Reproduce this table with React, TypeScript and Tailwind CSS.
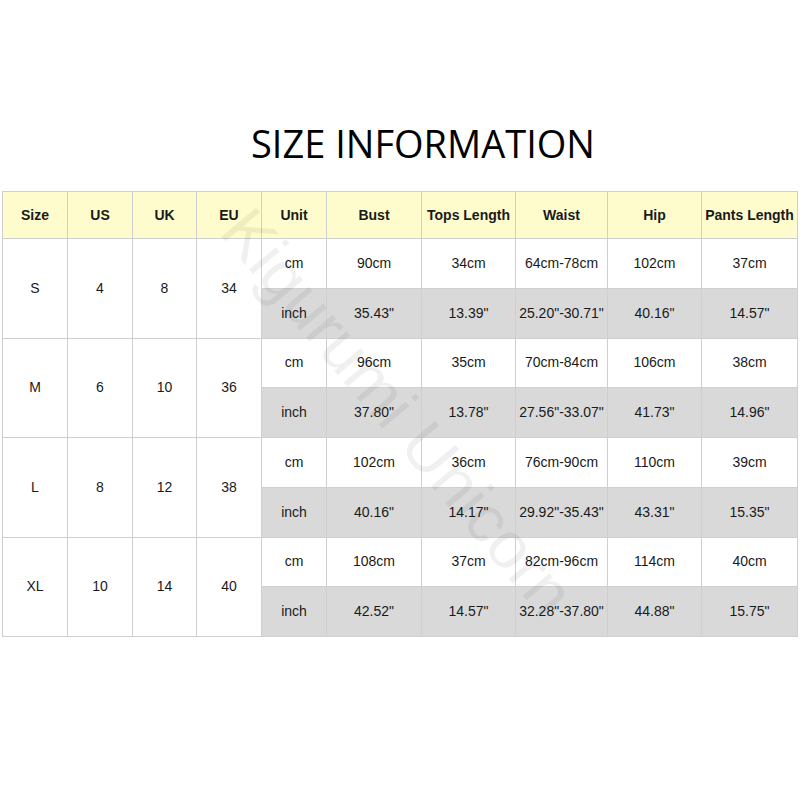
const headers = ["Size", "US", "UK", "EU", "Unit", "Bust", "Tops Length", "Waist", "Hip", "Pants Length"];
const widths = [65, 65, 64, 65, 65, 95, 94, 92, 94, 96];

const sizes = [
  { size: "S", us: "4", uk: "8", eu: "34", cm: ["90cm", "34cm", "64cm-78cm", "102cm", "37cm"], inch: ['35.43"', '13.39"', '25.20"-30.71"', '40.16"', '14.57"'] },
  { size: "M", us: "6", uk: "10", eu: "36", cm: ["96cm", "35cm", "70cm-84cm", "106cm", "38cm"], inch: ['37.80"', '13.78"', '27.56"-33.07"', '41.73"', '14.96"'] },
  { size: "L", us: "8", uk: "12", eu: "38", cm: ["102cm", "36cm", "76cm-90cm", "110cm", "39cm"], inch: ['40.16"', '14.17"', '29.92"-35.43"', '43.31"', '15.35"'] },
  { size: "XL", us: "10", uk: "14", eu: "40", cm: ["108cm", "37cm", "82cm-96cm", "114cm", "40cm"], inch: ['42.52"', '14.57"', '32.28"-37.80"', '44.88"', '15.75"'] },
];

export default function App() {
  return (
    <main className="bg-white w-[800px] h-[800px] relative overflow-hidden text-[#1a1a1a]" style={{ fontFamily: '"Liberation Sans", Arial, sans-serif' }}>

      <h1 className="pt-[118px] pl-[46px] text-center text-[38px] leading-[50px] text-black" style={{ fontFamily: '"Open Sans", "Noto Sans", sans-serif' }}>
        SIZE INFORMATION
      </h1>

      <div className="mt-[23px] ml-[2px]">
        <table className="table-fixed border-collapse text-[14px]">
          <colgroup>
            {widths.map((w, i) => (
              <col key={i} style={{ width: w }} />
            ))}
          </colgroup>
          <thead>
            <tr className="h-[47px] bg-[#fefccd]">
              {headers.map((h) => (
                <th key={h} className="border border-[#cfcfcf] font-bold text-center whitespace-nowrap p-0">
                  {h}
                </th>
              ))}
            </tr>
          </thead>
          <tbody>
            {sizes.map((s) => (
              <>
                <tr key={s.size + "cm"} className="h-[49.75px]">
                  <td rowSpan={2} className="border border-[#cfcfcf] text-center p-0">{s.size}</td>
                  <td rowSpan={2} className="border border-[#cfcfcf] text-center p-0">{s.us}</td>
                  <td rowSpan={2} className="border border-[#cfcfcf] text-center p-0">{s.uk}</td>
                  <td rowSpan={2} className="border border-[#cfcfcf] text-center p-0">{s.eu}</td>
                  <td className="border border-[#cfcfcf] text-center p-0">cm</td>
                  {s.cm.map((v, i) => (
                    <td key={i} className="border border-[#cfcfcf] text-center p-0 whitespace-nowrap">{v}</td>
                  ))}
                </tr>
                <tr key={s.size + "in"} className="h-[49.75px] bg-[#d9d9d9]">
                  <td className="border border-[#cfcfcf] text-center p-0">inch</td>
                  {s.inch.map((v, i) => (
                    <td key={i} className="border border-[#cfcfcf] text-center p-0 whitespace-nowrap">{v}</td>
                  ))}
                </tr>
              </>
            ))}
          </tbody>
        </table>
      </div>

      <div
        className="absolute left-[398px] top-[412px] pointer-events-none text-[66px] text-black/[0.06] whitespace-nowrap"
        style={{ transform: "translate(-50%, -50%) rotate(50deg)", fontFamily: '"Liberation Sans", Arial, sans-serif' }}
      >
        Kigurumi Unicorn
      </div>

    </main>
  );
}
